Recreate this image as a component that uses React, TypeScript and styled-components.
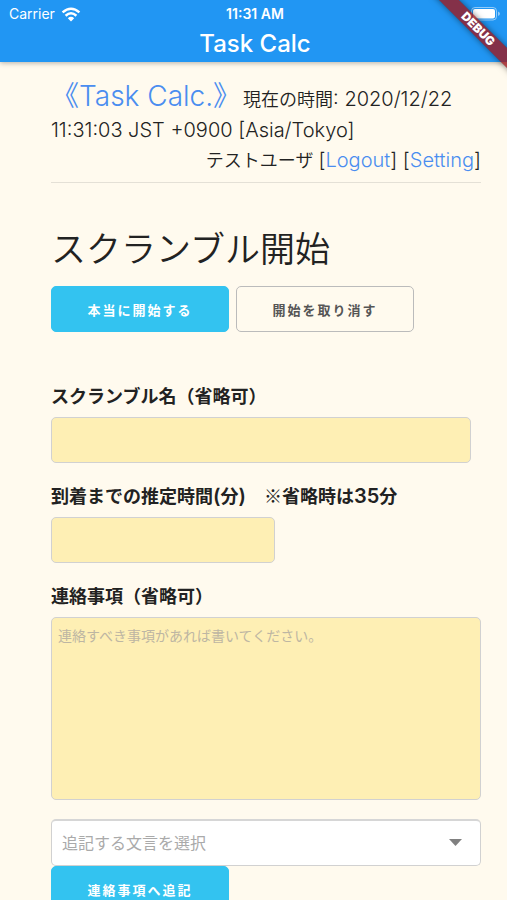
import React from "react";
import styled, { createGlobalStyle } from "styled-components";

const GlobalStyle = createGlobalStyle`
  *, *::before, *::after { box-sizing: border-box; }
  html, body { margin: 0; background: #fffaee; }
  body, button, input, textarea, select {
    font-family: Inter, "Noto Sans CJK JP", sans-serif;
  }
`;

const Screen = styled.div`
  position: relative;
  display: flex;
  flex-direction: column;
  height: 100vh;
  overflow: hidden;
  color: #222;
`;

const AppBar = styled.header`
  position: relative;
  z-index: 1;
  flex: none;
  background: #2196f3;
  color: #fff;
  padding: 4px 6px 3px 9px;
  box-shadow: 0 1px 5px rgba(0, 0, 0, 0.3);
`;

const StatusBar = styled.div`
  display: grid;
  grid-template-columns: 1fr auto 1fr;
  align-items: center;
  height: 20px;
  font-size: 14px;
  line-height: 20px;
`;

const Carrier = styled.span`
  display: flex;
  align-items: center;
  gap: 6px;
`;

const Clock = styled.time`
  font-weight: 600;
`;

const Battery = styled.svg`
  justify-self: end;
`;

const BarTitle = styled.div`
  padding-top: 5px;
  font-size: 24px;
  font-weight: 500;
  line-height: 30px;
  text-align: center;
`;

const RibbonCorner = styled.div`
  position: absolute;
  top: 0;
  right: 0;
  z-index: 2;
  width: 90px;
  height: 90px;
  overflow: hidden;
  pointer-events: none;
`;

const Ribbon = styled.div`
  position: absolute;
  top: 22px;
  right: -45px;
  width: 148px;
  height: 14px;
  background: rgba(158, 24, 30, 0.8);
  box-shadow: 0 0 6px rgba(0, 0, 0, 0.5);
  color: #fff;
  font-size: 12px;
  font-weight: 900;
  line-height: 14px;
  text-align: center;
  transform: rotate(45deg);
`;

const Page = styled.main`
  flex: 1;
  min-height: 0;
  overflow-y: auto;
  scrollbar-width: none;
  padding: 16px 26px 16px 51px;
`;

const SiteHeader = styled.div`
  border-bottom: 1px solid #e4e0d6;
  padding-bottom: 7px;
  font-size: 18px;
  font-weight: 350;
  line-height: 29px;
`;

const SiteLine = styled.p`
  margin: 0;
  line-height: 31px;
`;

const UserLine = styled.p`
  margin: 0;
  text-align: right;
`;

const Latin = styled.span`
  font-size: 20px;
  line-height: 20px;
`;

const Link = styled.a`
  color: #4a8df0;
  text-decoration: none;
`;

const Brand = styled(Link)`
  margin-right: 2px;
  font-size: 28px;
  line-height: 36px;
`;

const Heading = styled.h1`
  margin: 44px 0 15px;
  font-size: 35px;
  font-weight: 350;
  line-height: 44px;
`;

const Actions = styled.div`
  display: flex;
  flex-wrap: wrap;
  gap: 7px;
  margin-bottom: 50px;
`;

const Button = styled.button<{ $primary?: boolean }>`
  width: 178px;
  height: 46px;
  padding: 0;
  border: 1px solid ${(p) => (p.$primary ? "#33c3f0" : "#bbb")};
  border-radius: 5px;
  background: ${(p) => (p.$primary ? "#33c3f0" : "transparent")};
  color: ${(p) => (p.$primary ? "#fff" : "#555")};
  font-size: 13px;
  font-weight: 600;
  letter-spacing: 2px;
  cursor: pointer;
`;

const Field = styled.div`
  margin-bottom: 19px;
`;

const Label = styled.label`
  display: block;
  margin-bottom: 6px;
  font-size: 18px;
  font-weight: 600;
  line-height: 29px;
`;

const NoteMark = styled.span`
  font-family: "Noto Sans CJK JP", sans-serif;
  font-weight: 400;
  line-height: 20px;
`;

const TextInput = styled.input<{ $max: number }>`
  display: block;
  width: 100%;
  max-width: ${(p) => p.$max}px;
  height: 46px;
  padding: 7px;
  border: 1px solid #d1d1d1;
  border-radius: 5px;
  background: #feefb4;
  font-size: 18px;
`;

const TextArea = styled.textarea`
  display: block;
  width: 100%;
  height: 183px;
  padding: 7px 6px;
  border: 1px solid #d1d1d1;
  border-radius: 5px;
  background: #feefb4;
  font-size: 14px;
  line-height: 22px;
  resize: none;
  &::placeholder { color: #bdb6a3; opacity: 1; }
`;

const SelectBox = styled.div`
  position: relative;
`;

const Select = styled.select`
  display: block;
  appearance: none;
  width: 100%;
  height: 47px;
  padding: 0 40px 0 10px;
  border: 1px solid #d1d1d1;
  border-top: 2px solid #d6d6d6;
  border-radius: 5px;
  background: #fff;
  color: #aaa;
  font-size: 16px;
`;

const Caret = styled.svg`
  position: absolute;
  top: 20px;
  right: 19px;
  pointer-events: none;
`;

export default function App() {
  return (
    <Screen>
      <GlobalStyle />
      <AppBar>
        <StatusBar>
          <Carrier>
            Carrier
            <svg width="20" height="15" viewBox="0 0 20 15" fill="none" stroke="#fff" strokeWidth="2.5">
              <path d="M1.6 5.4 Q10 -2 18.4 5.4" />
              <path d="M4.6 8.7 Q10 3.8 15.4 8.7" />
              <path d="M10 14.4 L6.8 11.2 Q10 8.5 13.2 11.2 Z" fill="#fff" stroke="none" />
            </svg>
          </Carrier>
          <Clock>11:31 AM</Clock>
          <Battery width="30" height="14" viewBox="0 0 30 14">
            <rect x="0.5" y="0.5" width="25" height="12.5" rx="3.5" fill="none" stroke="#fff" strokeOpacity="0.5" />
            <rect x="2" y="2" width="22" height="9.5" rx="2" fill="#fff" />
            <path d="M27 4.5 Q29 5.2 29 6.8 Q29 8.3 27 9 Z" fill="#fff" fillOpacity="0.5" />
          </Battery>
        </StatusBar>
        <BarTitle>Task Calc</BarTitle>
      </AppBar>
      <RibbonCorner>
        <Ribbon>DEBUG</Ribbon>
      </RibbonCorner>

      <Page>
        <SiteHeader>
          <SiteLine>
            <Brand href="#">《Task Calc.》</Brand>
            現在の時間<Latin>: 2020/12/22 11:31:03 JST +0900 [Asia/Tokyo]</Latin>
          </SiteLine>
          <UserLine>
            テストユーザ{" "}
            <Latin>
              [<Link href="#logout">Logout</Link>] [<Link href="#setting">Setting</Link>]
            </Latin>
          </UserLine>
        </SiteHeader>

        <Heading>スクランブル開始</Heading>
        <Actions>
          <Button type="button" $primary>本当に開始する</Button>
          <Button type="button">開始を取り消す</Button>
        </Actions>

        <Field>
          <Label htmlFor="name">スクランブル名（省略可）</Label>
          <TextInput id="name" type="text" $max={420} />
        </Field>
        <Field>
          <Label htmlFor="minutes">
            到着までの推定時間<Latin>(</Latin>分<Latin>)</Latin>　<NoteMark>※</NoteMark>省略時は<Latin>35</Latin>分
          </Label>
          <TextInput id="minutes" type="text" inputMode="numeric" $max={224} />
        </Field>
        <Field>
          <Label htmlFor="message">連絡事項（省略可）</Label>
          <TextArea id="message" placeholder="連絡すべき事項があれば書いてください。" />
        </Field>
        <SelectBox>
          <Select aria-label="追記する文言を選択" defaultValue="">
            <option value="">追記する文言を選択</option>
          </Select>
          <Caret width="13" height="7" viewBox="0 0 13 7">
            <path d="M0 0 H13 L6.5 7 Z" fill="#808080" />
          </Caret>
        </SelectBox>
        <Button type="button" $primary>連絡事項へ追記</Button>
      </Page>
    </Screen>
  );
}
